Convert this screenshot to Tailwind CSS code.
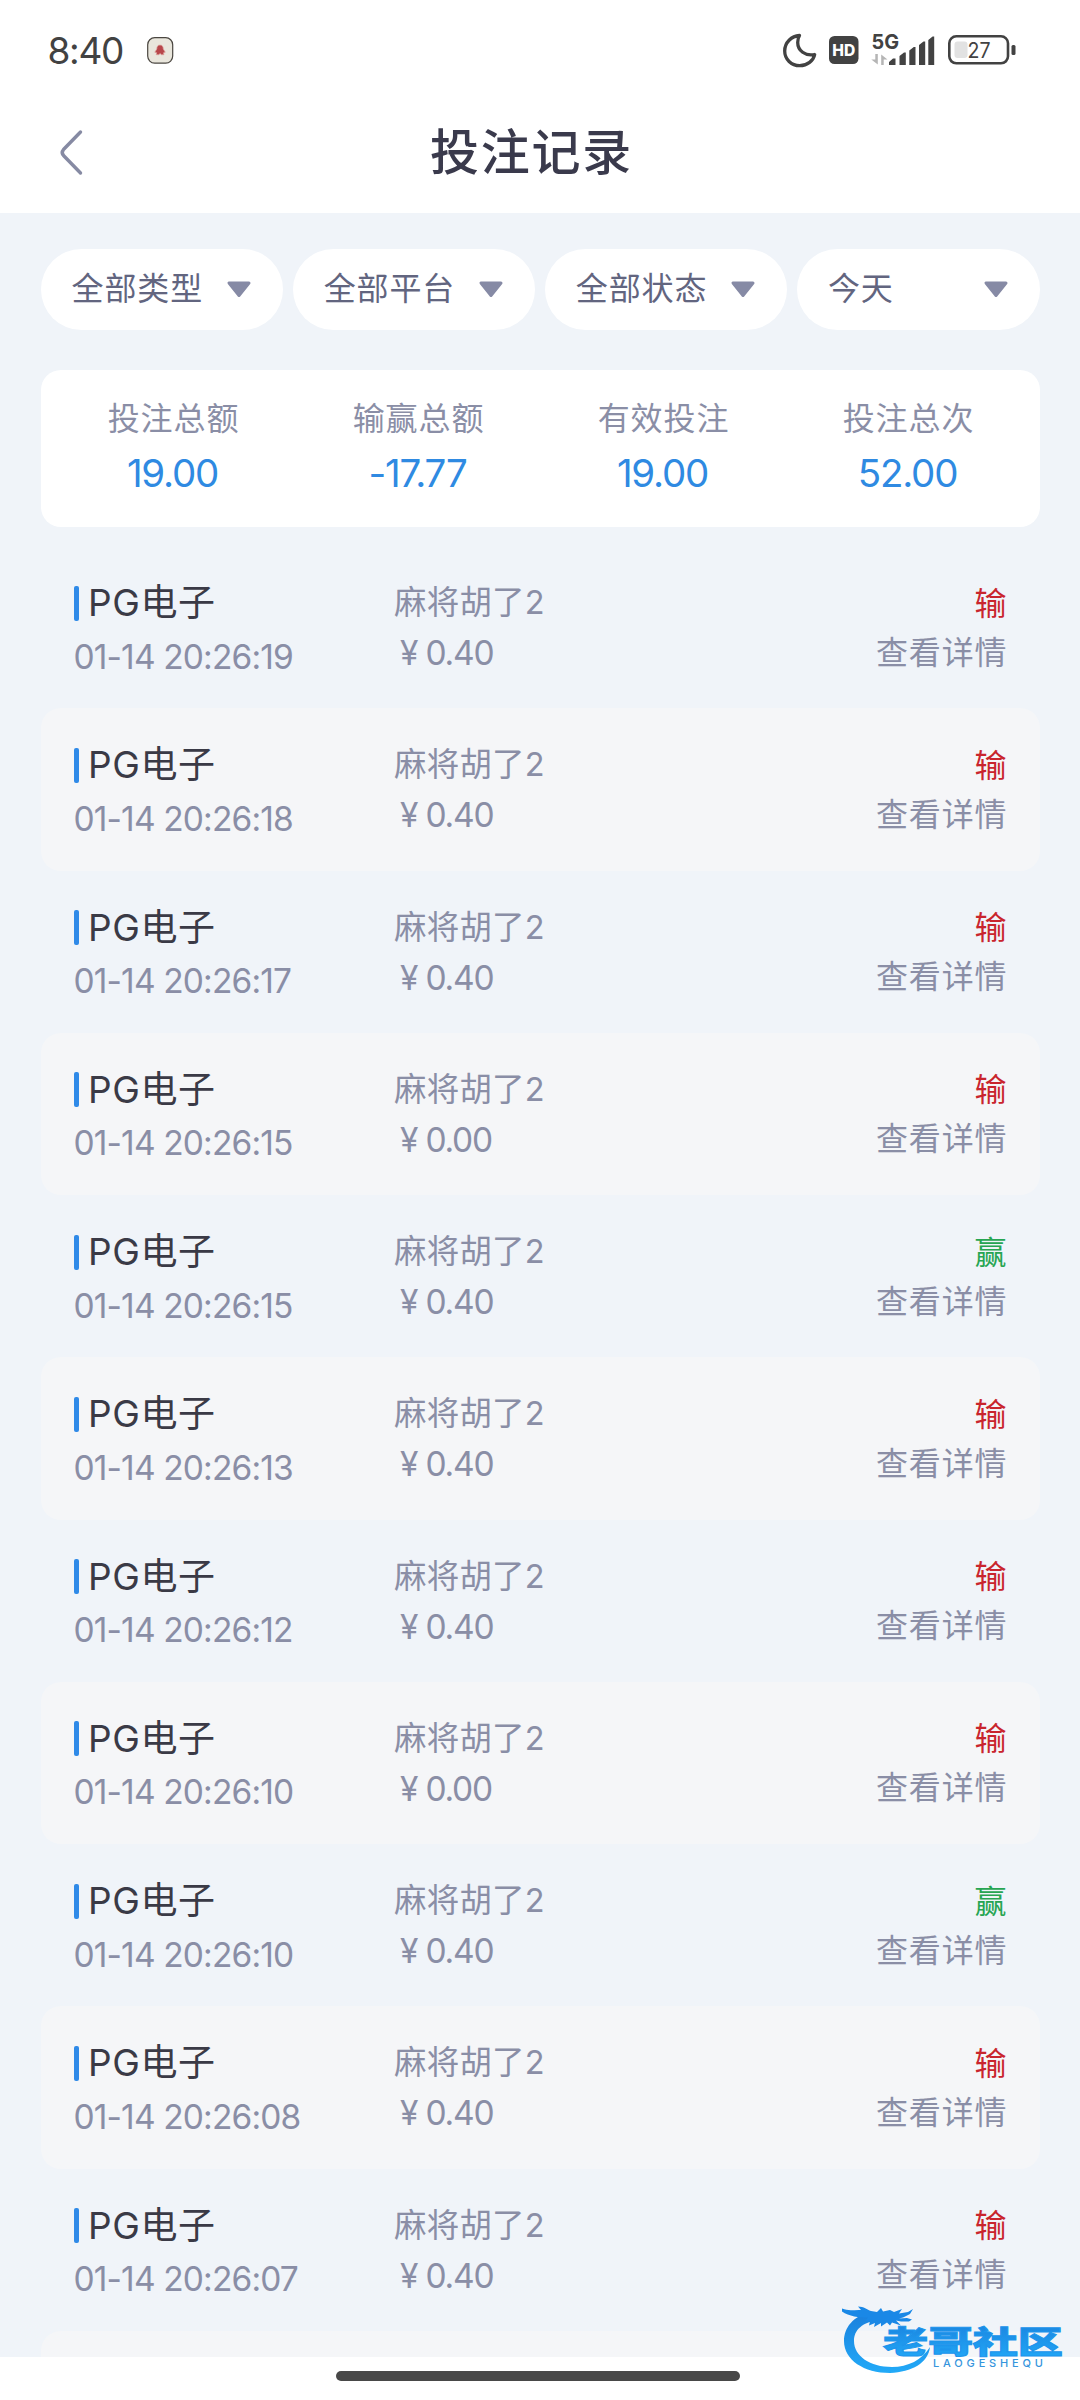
<!DOCTYPE html>
<html lang="zh-CN">
<head>
<meta charset="utf-8">
<title>投注记录</title>
<script src="https://cdn.jsdelivr.net/npm/@tailwindcss/browser@4"></script>
</head>
<body class="bg-white">
<div class="relative flex h-[2400px] w-[1080px] flex-col overflow-hidden bg-white font-['Inter','Noto_Sans_CJK_SC',sans-serif] text-[#8a8ea6]">
  <!-- status bar -->
  <div class="flex h-[100px] shrink-0 items-center pl-[47.500px] pr-[62px] text-[#424242]">
    <span class="text-[37px] leading-none tracking-[-1.300px]">8:40</span>
    <svg class="ml-[23.500px]" width="27" height="27" viewBox="0 0 27 27"><rect x=".7" y=".7" width="25" height="25.4" rx="7" fill="#e9e6dc" stroke="#4a4640" stroke-width="1.2"/><path d="M13 8c2.500 0 3.300 2 3.300 4l2 3.200-1.800.6.500 1.900h-2.600l-1.300-1.200-1.300 1.200H9.200l.5-1.900-1.900-.6 2-3.200c0-2 .7-4 3.200-4z" fill="#b8474b" stroke="#dfa9a2" stroke-width=".7"/></svg>
    <svg class="ml-auto" width="236" height="40" viewBox="782 30 236 40">
      <path d="M799.500 35.500c-8 .5-14.800 7-14.800 15.500 0 8.300 6.700 14.700 15 14.700 7.600 0 13.800-5 15-11.200-9.500 2-17-4-17-12 0-2.700.6-5 1.800-7z" fill="none" stroke="#424242" stroke-width="3.300" stroke-linejoin="round"/>
      <rect x="829" y="36" width="29.500" height="28" rx="5.500" fill="#424242"/>
      <text x="843.800" y="55.800" text-anchor="middle" textLength="23" lengthAdjust="spacingAndGlyphs" font-size="16" font-weight="800" fill="#fff">HD</text>
      <text x="871.500" y="49" textLength="27.500" lengthAdjust="spacingAndGlyphs" font-size="20.500" font-weight="700" fill="#424242">5G</text>
      <path d="M877.800 54v10.500l-6.500-5h4V54zM881.200 65V54.500l6.300 5h-3.800V65z" fill="#b5b5b5"/>
      <path d="M889 65v-3l4-3.500h2.500V65zM899.500 65V56l4.500-3.500h1.800V65zM909.300 65V50.500l4.500-3.500h1.700V65zM919 65V45l4.500-3.500h1.700V65zM928.300 65V40l4.300-3.500h1.600V65z" fill="#424242"/>
      <rect x="949.300" y="36.300" width="58.700" height="27" rx="7" fill="none" stroke="#424242" stroke-width="2.600"/>
      <rect x="954.500" y="41.500" width="13" height="16.500" rx="3" fill="#e2e2e2"/>
      <rect x="1011.500" y="45" width="4" height="10" rx="1.500" fill="#424242"/>
      <text x="979" y="58" text-anchor="middle" textLength="23" lengthAdjust="spacingAndGlyphs" font-size="21.500" fill="#424242">27</text>
    </svg>
  </div>
  <!-- title bar -->
  <header class="grid h-[113px] shrink-0 grid-cols-[200px_1fr_200px] items-start">
    <svg class="ml-[57.500px] mt-[28px]" width="28" height="48" viewBox="0 0 28 48" fill="none" stroke="#868aa3" stroke-width="3.400" stroke-linecap="round" stroke-linejoin="round"><path d="M22.500 4 5.500 21.500q-2.500 3 0 6L22.500 45"/></svg>
    <h1 class="mt-[17px] -translate-x-[8.500px] text-center text-[49px] font-medium leading-[72px] tracking-[1.700px] text-[#3a3a4c]">投注记录</h1>
  </header>

  <main class="flex h-[2144px] shrink-0 flex-col overflow-hidden bg-[#f0f4f9] px-[40.500px]">
    <!-- filters -->
    <div id="filters" class="mt-[35.500px] grid shrink-0 grid-cols-4 gap-[9.500px]"></div>
    <!-- totals -->
    <div id="totals" class="mt-[40px] grid h-[157.500px] shrink-0 grid-cols-4 rounded-[20px] bg-white px-[9.500px] pt-[25.500px]"></div>
    <!-- bet records -->
    <div id="list" class="mt-[19px]"></div>
  </main>

  <div class="mt-[14px] mr-[5px] h-[10px] w-[404px] self-center rounded-full bg-[#484848]"></div>

  <!-- watermark -->
  <svg class="absolute left-[835px] top-[2295px]" width="235" height="85" viewBox="835 2295 235 85">
    <defs><linearGradient id="g" x1="0" y1="0" x2="0" y2="1"><stop offset="0" stop-color="#1a7fdc"/><stop offset="1" stop-color="#22aaf8"/></linearGradient></defs>
    <path d="M870 2312C853 2316 844 2328 844 2341C844 2360 864 2373 890 2373C912 2372 928 2363 930 2347C922 2360 908 2367 892 2367C870 2367 854 2356 854 2341C854 2330 862 2322 880 2320Z" fill="url(#g)"/>
    <path d="M842 2308.500c7 3 12 1 19 1.500l-3-3.500c6 0 9 3 13 4.500l6 1 4-4 2 3.500 7-1.500 4 2 8-3-3 4.500 9-1.500 5-3-3 5-7 3.500-4 1 8-.5 5 1.500-3 2h-8l-5-1 5 5-9-3-2 3-3-3-6 4v-3.500l-7 4 1-4-6 2.500 1-4.500-5 .5 3-4c-9 0-19-1-26-6z" fill="#1a88e6"/>
    <g transform="translate(883 2353) scale(1.480 1)"><text x="0" y="0" textLength="121.500" lengthAdjust="spacing" font-size="30.500" font-weight="900" font-family="Noto Sans CJK SC" fill="url(#g)" stroke="#1d95ec" stroke-width="1">老哥社区</text></g>
    <text x="933" y="2367" textLength="110" lengthAdjust="spacing" font-size="11" font-weight="500" font-family="Inter" fill="#3695dd">LAOGESHEQU</text>
  </svg>
</div>
<script>
document.getElementById('filters').innerHTML = ['全部类型','全部平台','全部状态','今天'].map(t => `
  <button class="flex h-[81px] items-center justify-between rounded-full bg-white pl-[31px] pr-[31px]">
    <span class="text-[32px] leading-[48px] tracking-[0.900px] text-[#62657f]">${t}</span>
    <svg width="26" height="17" viewBox="0 0 26 17"><path d="M3 2h20L13 14.500z" fill="#868aa5" stroke="#868aa5" stroke-width="3" stroke-linejoin="round"/></svg>
  </button>`).join('');
document.getElementById('totals').innerHTML = [['投注总额','19.00'],['输赢总额','-17.77'],['有效投注','19.00'],['投注总次','52.00']].map(([a,b]) => `
  <div class="flex flex-col items-center">
    <span class="translate-x-[1px] text-[32px] leading-[48px] tracking-[0.900px]">${a}</span>
    <span class="mt-[4px] text-[38.500px] leading-[52px] tracking-[-1.200px] text-[#2f8ae2]">${b}</span>
  </div>`).join('');
const rows = [['19','0.40'],['18','0.40'],['17','0.40'],['15','0.00'],['15','0.40',1],['13','0.40'],['12','0.40'],['10','0.00'],['10','0.40',1],['08','0.40'],['07','0.40']];
document.getElementById('list').innerHTML = rows.map(([s,m,w],i) => `
  <div class="grid h-[162.250px] grid-cols-[320.500px_1fr_300px] rounded-[20px] pl-[33px] pr-[32px] ${i%2 ? 'bg-[#f5f6f8]' : ''}">
    <div class="pt-[33px]">
      <div class="flex h-[48px] items-center">
        <i class="h-[35px] w-[5.500px] rounded-[2px] bg-[#2f8ae8]"></i>
        <span class="ml-[9px] text-[37px] leading-[48px] tracking-[0.600px] text-[#3a3a46]">PG电子</span>
      </div>
      <div class="mt-[5.500px] text-[33.500px] leading-[48px] tracking-[-0.850px]">01-14 20:26:${s}</div>
    </div>
    <div class="pt-[32px]">
      <div class="text-[32.500px] leading-[50px] tracking-[0.200px]">麻将胡了2</div>
      <div class="pl-[6px] text-[33.500px] leading-[50px] tracking-[-1.200px]">¥ ${m}</div>
    </div>
    <div class="pt-[32.500px] text-right text-[32px] leading-[49px] tracking-[0.900px]">
      <div class="${w ? 'text-[#27a552]' : 'text-[#c9252d]'}">${w ? '赢' : '输'}</div>
      <div>查看详情</div>
    </div>
  </div>`).join('') + '<div class="h-[162px] rounded-[20px] bg-[#f5f6f8]"></div>';
</script>
</body>
</html>
